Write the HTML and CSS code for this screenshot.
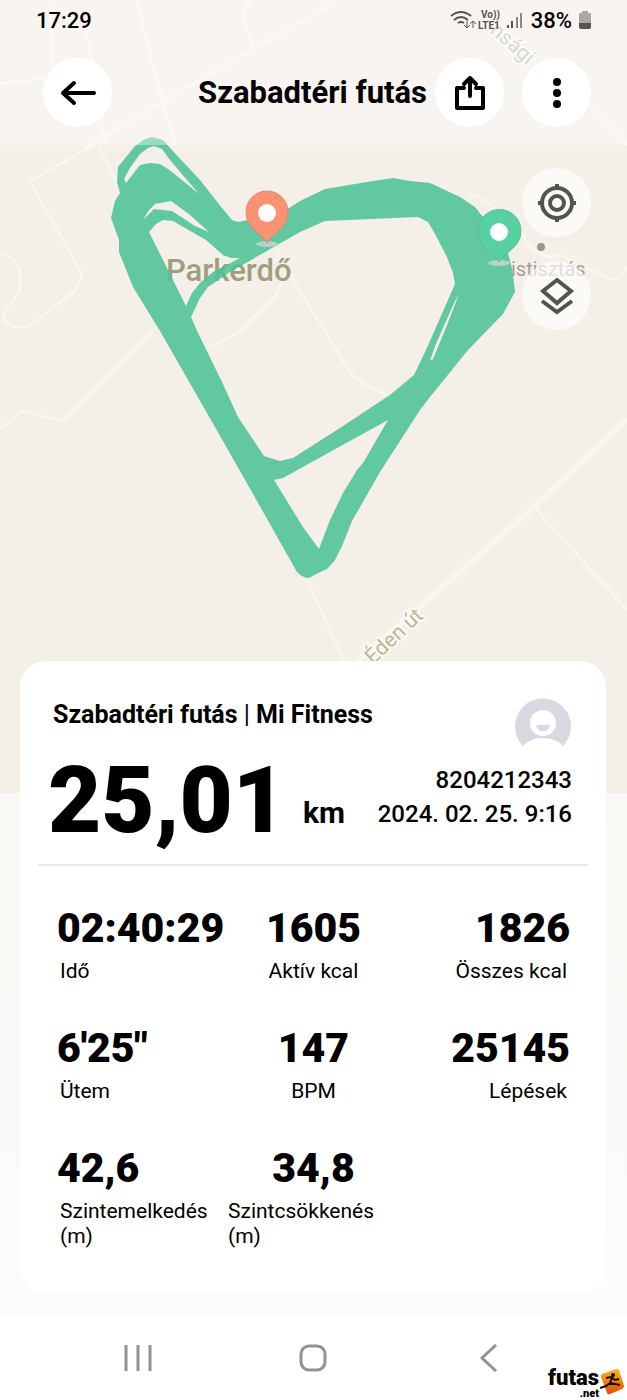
FILE: index.html
```html
<!DOCTYPE html>
<html lang="hu">
<head>
  <meta charset="UTF-8" />
  <meta name="viewport" content="width=device-width, initial-scale=1.0" />
  <title>Szabadtéri futás</title>
  <link rel="stylesheet" href="styles.css">
</head>
<body>

<svg class="map" viewBox="0 0 627 793" preserveAspectRatio="xMidYMin slice" aria-hidden="true">
  <!-- roads -->
  <g class="road">
    <path d="M0 429 L22 411 L62 421 L152 331 M210 348 L240 331 L276 295 L282 280" />
    <path d="M306 578 L346 665 M534 507 L627 610" />
    <path d="M85 148 L160 103 L330 6 M137 0 L155 75 L175 145 M50 5 L53 62 M85 20 L105 145 M0 84 L45 78 M250 0 L243 15 L255 50" />
    <path d="M98 145 L118 185 M590 108 L627 145 M468 194 C480 198 490 200 500 217 M520 225 Q530 262 560 255 Q590 270 610 279 Q622 280 627 265" />
  </g>
  <path class="road wide" d="M627 419 L534 507 L424 603 L350 668" />
  <g class="path">
    <path d="M94 145 L30 181 L82 274 L76 290 L32 324 Q16 333 4 319 L4 312 L20 291 L20 271 Q14 254 0 254" />
    <path d="M276 250 L296 285 L348 369 Q362 387 388 395" />
  </g>

  <text class="place" x="166" y="281">Parkerdő</text>
  <text class="station" x="511" y="276">istisztás</text>
  <circle class="dot" cx="541" cy="247" r="4" />
  <text class="street" transform="translate(373 665) rotate(-43)">Éden út</text>
  <text class="street pale" transform="translate(489 32) rotate(41)">nsági</text>

  <!-- running track -->
  <path class="track" fill-rule="evenodd" d="
    M152 137 L145 139 L135 146 L118 167 L117 182 L120 193 L115 201 L111 218 L119 240 L119 252 L133 287 L160 331
    L215 427 L240 471 L297 572 Q303 578 309 578 L316 574 L327 569 L335 560 L342 546 L352 521 L380 472 L420 410 L430 397
    L468 350 L503 314 L515 292 L512 268 L507 250 L483 217 L475 207 L460 197 L430 183 L410 181 L393 178 L367 182
    L325 189 L300 201 L280 214 L238 222 L232 220 L222 208 L200 180 L170 148 L163 140 Z
    M154 146 L162 149 L170 160 L199 194 L182 180 L168 169 L160 164 L150 163 L140 165 L133 174 L126 183 L124 179 L130 168 L140 154 L148 148 Z
    M143 220 L149 210 L155 204 L171 201 L178 206 L190 215 L209 232 L195 226 L172 211 L154 209 Z
    M149 232 L156 224 L163 220 L173 221 L206 240 L223 255 L231 258 L240 258 L213 272 L200 283 L192 293 L186 306 Z
    M300 232 L325 221 L418 217 L428 222 L434 232 L447 257 L453 273 L455 284 L426 350 L414 375 L390 395 L340 428
    L293 458 L280 461 L264 456 L238 417 L222 382 L198 333 L191 317 L200 298 L208 287 L230 272 L272 248 Z
    M274 480 L283 478 L310 463 L388 420 L363 463 L357 470 L343 493 L330 520 L319 549 L303 527 Z
    M459 294 L447 325 L433 359 L430 361 L435 346 L454 303 Z" />

  <!-- finish and start pins -->
  <ellipse class="pin-shadow" cx="267" cy="244" rx="11" ry="3" />
  <path class="pin finish" d="M267 243 C263 234 246 229 246 212 A21 21 0 0 1 288 212 C288 229 271 234 267 243 Z" />
  <circle fill="#fff" cx="267" cy="213" r="9" />
  <ellipse class="pin-shadow" cx="499" cy="263" rx="11" ry="3" />
  <path class="pin start" d="M499 262 C495 253 478 248 478 231 A21 21 0 0 1 521 231 C521 248 503 253 499 262 Z" />
  <circle fill="#fff" cx="499" cy="232" r="9" />
</svg>

<div class="top">
  <div class="status">
    <span class="clock">17:29</span>
    <svg width="74" height="20" viewBox="0 0 74 20" aria-hidden="true">
      <g fill="none" stroke="#55534f" stroke-width="2">
        <path d="M1 6 Q11 -2 21 6 M4 10 Q11 4 18 10 M8 13 Q11 11 14 13" />
        <path d="M17 11 V18 M14 15 L17 18 L20 15 M23 18 V11 M20 14 L23 11 L26 14" stroke-width="1" />
      </g>
      <text class="tiny" x="31" y="8">Vo))</text>
      <text class="tiny" x="28" y="19">LTE1</text>
      <path d="M58 18 V15 M62 18 V11" stroke="#55534f" stroke-width="2" />
      <path d="M67 18 V7 M71 18 V3" stroke="#8a8884" stroke-width="2" />
    </svg>
    <span class="charge">38%</span>
    <svg width="12" height="18" viewBox="0 0 12 18" aria-hidden="true">
      <path fill="#aaa8a4" d="M3 0 H9 V2 H11 Q12 2 12 3 V12 H0 V3 Q0 2 1 2 H3 Z" />
      <path fill="#55534f" d="M0 12 H12 V16 Q12 18 10 18 H2 Q0 18 0 16 Z" />
    </svg>
  </div>

  <header class="bar">
    <button class="round" aria-label="Vissza">
      <svg width="36" height="28" viewBox="0 0 36 28"><path class="ink" d="M34 14 H3 M14 4 L3 14 L14 24" /></svg>
    </button>
    <h1>Szabadtéri futás</h1>
    <button class="round" aria-label="Megosztás">
      <svg width="32" height="36" viewBox="0 0 32 36"><path class="ink" d="M10 13 H3 V33 H29 V13 H22 M16 21 V3 M10 9 L16 3 L22 9" /></svg>
    </button>
    <button class="round" aria-label="Továbbiak">
      <svg width="8" height="30" viewBox="0 0 8 30"><circle cx="4" cy="4" r="4" /><circle cx="4" cy="15" r="4" /><circle cx="4" cy="26" r="4" /></svg>
    </button>
  </header>
</div>

<div class="tools">
  <button class="round clear" aria-label="Pozíció">
    <svg width="40" height="40" viewBox="0 0 40 40">
      <circle cx="20" cy="20" r="15" /><circle cx="20" cy="20" r="7" />
      <path d="M20 1 V6 M20 34 V39 M1 20 H6 M34 20 H39" />
    </svg>
  </button>
  <button class="round clear" aria-label="Rétegek">
    <svg width="36" height="38" viewBox="0 0 36 38"><path d="M18 3 L32 14 L18 26 L4 14 Z M3 24 L18 35 L33 24" /></svg>
  </button>
</div>

<main class="card">
  <section class="summary">
    <div class="distance">
      <h2>Szabadtéri futás <span>|</span> Mi Fitness</h2>
      <p class="total">25,01 <small>km</small></p>
    </div>
    <div class="user">
      <svg width="58" height="50" viewBox="0 0 58 50" aria-hidden="true">
        <path fill="#d8d8e0" d="M9 49 A28 28 0 1 1 49 49 Q42 41 29 41 Q16 41 9 49 Z" />
        <circle fill="#fff" cx="29" cy="26" r="13" />
        <path fill="#d8d8e0" d="M22 28 H36 Q35 34 29 34 Q23 34 22 28 Z" />
      </svg>
      <p>8204212343</p>
      <p>2024. 02. 25. 9:16</p>
    </div>
  </section>

  <dl class="stats">
    <div><dd>02:40:29</dd><dt>Idő</dt></div>
    <div><dd>1605</dd><dt>Aktív kcal</dt></div>
    <div><dd>1826</dd><dt>Összes kcal</dt></div>
    <div><dd>6'25"</dd><dt>Ütem</dt></div>
    <div><dd>147</dd><dt>BPM</dt></div>
    <div><dd>25145</dd><dt>Lépések</dt></div>
    <div><dd>42,6</dd><dt>Szintemelkedés (m)</dt></div>
    <div><dd>34,8</dd><dt class="long">Szintcsökkenés (m)</dt></div>
  </dl>
</main>

<nav class="keys">
  <button aria-label="Legutóbbiak"><svg width="28" height="28" viewBox="0 0 28 28"><path d="M2 1 V27 M14 1 V27 M26 1 V27" /></svg></button>
  <button aria-label="Kezdőlap"><svg width="28" height="28" viewBox="0 0 28 28"><rect x="2" y="2" width="24" height="24" rx="8" /></svg></button>
  <button aria-label="Vissza"><svg width="28" height="28" viewBox="0 0 28 28"><path d="M21 1 L7 14 L21 27" /></svg></button>
</nav>

<div class="brand">
  <div class="brand-name">futas<span>.net</span></div>
  <svg width="26" height="28" viewBox="0 0 26 28" aria-hidden="true">
    <defs>
      <linearGradient id="tile" x1="0" y1="0" x2="0" y2="1">
        <stop offset="0" stop-color="#fbb917" /><stop offset="1" stop-color="#e8480c" />
      </linearGradient>
    </defs>
    <path fill="url(#tile)" d="M3 6 L17 1 Q19 0 20 2 L25 18 Q25 20 23 21 L11 26 Q9 27 8 25 L2 9 Q1 7 3 6 Z" />
    <circle cx="14" cy="7" r="2" />
    <path fill="none" stroke="#1a0d00" stroke-width="2" d="M7 10 L12 9 L16 12 L20 11 M13 10 L11 15 L16 16 L21 17 M11 15 L7 18 L1 20" />
  </svg>
</div>

</body>
</html>
```
FILE: styles.css
```css
* {
  box-sizing: border-box;
}

body {
  margin: 0;
  position: relative;
  min-height: 100vh;
  background: linear-gradient(#f9f8f5 793px, #fbfaf8 1150px, #fcfcfb 1315px);
  font-family: Roboto, 'Liberation Sans', sans-serif;
  color: #000;
  overflow-x: hidden;
}

h1, h2, p, dl, dd {
  margin: 0;
}

button {
  padding: 0;
  border: 0;
  background: none;
  cursor: pointer;
}

/* map */
.map {
  position: absolute;
  top: 0;
  left: 0;
  z-index: -1;
  width: 100%;
  height: 793px;
  background: #f4f0e8;
}

.road, .path {
  fill: none;
  stroke: #f9f6f0;
  stroke-width: 3;
}

.road.wide {
  stroke-width: 6;
}

.path {
  stroke: #fcfaf5;
  stroke-width: 2;
  stroke-dasharray: 3 1;
}

.track {
  fill: #4cc296;
  fill-opacity: 0.88;
}

.place {
  font: 500 31px Roboto, sans-serif;
  fill: #a09e80;
}

.station {
  font-size: 20px;
  fill: #a89c98;
}

.dot {
  fill: #9a938e;
}

.street {
  font-size: 21px;
  fill: #bdb598;
  stroke: #fbf9f3;
  stroke-width: 4;
  paint-order: stroke;
}

.street.pale {
  fill: #c4c0b8;
}

.pin.finish {
  fill: #fc9274;
  stroke: #e58468;
}

.pin.start {
  fill: #57d0a2;
  stroke: #4fc498;
}

.pin-shadow {
  fill: #b4d4c8;
}

/* status bar and title */
.top {
  height: 145px;
  background: rgba(255, 255, 255, 0.36);
}

.status {
  display: flex;
  align-items: center;
  height: 40px;
  padding: 0 36px;
  font-size: 22px;
  font-weight: 500;
}

.clock {
  flex: 1;
}

.charge {
  margin: 0 7px;
}

.tiny {
  font-size: 10px;
  font-weight: 700;
  fill: #55534f;
}

.bar {
  display: flex;
  align-items: center;
  margin-top: 18px;
  padding: 0 36px 0 43px;
}

.bar h1 {
  flex: 1;
  padding-right: 8px;
  text-align: right;
  font-size: 31px;
  line-height: 36px;
}

.round {
  display: flex;
  align-items: center;
  justify-content: center;
  width: 69px;
  height: 69px;
  border-radius: 50%;
  background: #fff;
}

.bar .round + .round {
  margin-left: 18px;
}

.ink {
  fill: none;
  stroke: #000;
  stroke-width: 4;
  stroke-linecap: round;
  stroke-linejoin: round;
}

.tools {
  display: flex;
  flex-direction: column;
  align-items: flex-end;
  gap: 24px;
  height: 516px;
  padding: 23px 36px;
}

.clear {
  background: rgba(255, 255, 255, 0.65);
}

.clear svg {
  fill: none;
  stroke: #55534f;
  stroke-width: 4;
}

/* workout card */
.card {
  margin: 0 21px 22px 20px;
  padding: 36px 18px 44px;
  border-radius: 26px;
  background: #fff;
}

.summary {
  display: flex;
  justify-content: space-between;
  height: 169px;
  padding: 0 16px 0 10px;
  border-bottom: 2px solid #e8e8e8;
}

.distance h2 {
  padding-left: 5px;
  font-size: 25px;
  line-height: 36px;
}

.distance h2 span {
  font-weight: 400;
}

.total {
  display: flex;
  align-items: flex-end;
  gap: 17px;
  font-size: 92px;
  font-weight: 900;
  line-height: 136px;
  white-space: nowrap;
}

.total small {
  padding-bottom: 38px;
  font-size: 30px;
  font-weight: 700;
  line-height: 36px;
}

.user {
  text-align: right;
  font-size: 24px;
  font-weight: 500;
  line-height: 34px;
  white-space: nowrap;
}

.user svg {
  display: block;
  margin: 0 0 16px auto;
}

.stats {
  display: grid;
  grid-template-columns: repeat(3, 1fr);
  row-gap: 38px;
  padding: 36px 18px 0 19px;
}

.stats div {
  display: flex;
  flex-direction: column;
}

.stats dd {
  font-size: 41px;
  font-weight: 900;
  line-height: 52px;
}

.stats dt {
  padding: 5px 3px 0;
  font-size: 21px;
  line-height: 25px;
}

.stats div:nth-child(3n+2) {
  text-align: center;
}

.stats div:nth-child(3n) {
  text-align: right;
}

.stats dt.long {
  padding-left: 0;
  text-align: left;
}

/* system keys */
.keys {
  display: flex;
  justify-content: space-around;
  height: 85px;
  padding: 4px 50px 0;
  background: #fff;
}

.keys button {
  width: 80px;
}

.keys svg {
  fill: none;
  stroke: #929292;
  stroke-width: 3;
}

.brand {
  position: absolute;
  right: 2px;
  bottom: 0;
  display: flex;
}

.brand-name {
  font: 900 22px/19px Roboto, sans-serif;
  text-align: right;
}

.brand-name span {
  display: block;
  font-size: 11px;
  line-height: 13px;
}
```
